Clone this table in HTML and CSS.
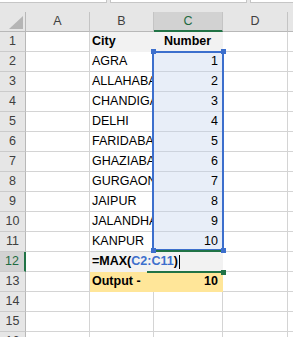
FILE: index.html
```html
<!DOCTYPE html>
<html>
<head>
<meta charset="utf-8">
<link rel="stylesheet" href="styles.css">
</head>
<body>
<div class="sheet">
  <div class="topbar"><span class="box b1"></span><span class="box b2"></span><span class="box b3"></span></div>
  <div class="spacer"></div>
  <div class="row hdr">
    <div class="corner"><svg width="14" height="13" viewBox="0 0 14 13"><polygon points="14,0 14,13 0,13" fill="#b5b5b5"/></svg></div>
    <div class="ch">A</div><div class="ch">B</div><div class="ch csel">C</div><div class="ch">D</div><div class="ch last"></div>
  </div>
  <div class="row"><div class="rh">1</div><div class="c"></div><div class="c b gray">City</div><div class="c b gray ctr">Number</div><div class="c"></div><div class="c"></div></div>
  <div class="row"><div class="rh">2</div><div class="c"></div><div class="c">AGRA</div><div class="c num sel">1</div><div class="c"></div><div class="c"></div></div>
  <div class="row"><div class="rh">3</div><div class="c"></div><div class="c">ALLAHABAD</div><div class="c num sel">2</div><div class="c"></div><div class="c"></div></div>
  <div class="row"><div class="rh">4</div><div class="c"></div><div class="c">CHANDIGARH</div><div class="c num sel">3</div><div class="c"></div><div class="c"></div></div>
  <div class="row"><div class="rh">5</div><div class="c"></div><div class="c">DELHI</div><div class="c num sel">4</div><div class="c"></div><div class="c"></div></div>
  <div class="row"><div class="rh">6</div><div class="c"></div><div class="c">FARIDABAD</div><div class="c num sel">5</div><div class="c"></div><div class="c"></div></div>
  <div class="row"><div class="rh">7</div><div class="c"></div><div class="c">GHAZIABAD</div><div class="c num sel">6</div><div class="c"></div><div class="c"></div></div>
  <div class="row"><div class="rh">8</div><div class="c"></div><div class="c">GURGAON</div><div class="c num sel">7</div><div class="c"></div><div class="c"></div></div>
  <div class="row"><div class="rh">9</div><div class="c"></div><div class="c">JAIPUR</div><div class="c num sel">8</div><div class="c"></div><div class="c"></div></div>
  <div class="row"><div class="rh">10</div><div class="c"></div><div class="c">JALANDHAR</div><div class="c num sel">9</div><div class="c"></div><div class="c"></div></div>
  <div class="row"><div class="rh">11</div><div class="c"></div><div class="c">KANPUR</div><div class="c num sel">10</div><div class="c"></div><div class="c"></div></div>
  <div class="row"><div class="rh rsel">12</div><div class="c"></div><div class="c b gray span2">=MAX(<span class="ref">C2:C11</span>)</div><div class="c"></div><div class="c"></div></div>
  <div class="row"><div class="rh">13</div><div class="c"></div><div class="c b yellow">Output -</div><div class="c b num yellow">10</div><div class="c"></div><div class="c"></div></div>
  <div class="row"><div class="rh">14</div><div class="c"></div><div class="c"></div><div class="c"></div><div class="c"></div><div class="c"></div></div>
  <div class="row"><div class="rh">15</div><div class="c"></div><div class="c"></div><div class="c"></div><div class="c"></div><div class="c"></div></div>
  <div class="row"><div class="rh">16</div><div class="c"></div><div class="c"></div><div class="c"></div><div class="c"></div><div class="c"></div></div>

  <div class="selbox"></div>
  <span class="handle blue h-tl"></span>
  <span class="handle blue h-tr"></span>
  <span class="handle blue h-bl"></span>
  <span class="handle blue h-br"></span>
  <span class="gline g-top"></span>
  <span class="gline g-bot"></span>
  <span class="handle green h-g"></span>
  <span class="caret"></span>
</div>
</body>
</html>
```

FILE: styles.css
```css
html, body {
  margin: 0;
  padding: 0;
  background: #ffffff;
  overflow: hidden;
}
.sheet {
  position: relative;
  width: 293px;
  height: 337px;
  overflow: hidden;
  font-family: "Liberation Sans", Arial, sans-serif;
  font-size: 12.5px;
  color: #000;
}
.topbar {
  height: 3px;
  background: #e6e6e6;
  position: relative;
  display: flex;
}
.topbar .box {
  height: 2px;
  background: #ffffff;
  border-bottom: 1px solid #c6c6c6;
}
.topbar .b1 { width: 106px; border-right: 1px solid #c6c6c6; }
.topbar .b2 { width: 135px; margin-left: 3px; border-right: 1px solid #c6c6c6; border-left: 1px solid #c6c6c6; }
.topbar .b3 { flex: 1; margin-left: 3px; border-left: 1px solid #c6c6c6; }
.spacer {
  height: 9px;
  background: #e6e6e6;
}
.row {
  display: grid;
  grid-template-columns: 26px 64px 64px 69px 65px 1fr;
  height: 20px;
}
.row > div {
  box-sizing: border-box;
  height: 20px;
  line-height: 19px;
  border-right: 1px solid #d4d4d4;
  border-bottom: 1px solid #d4d4d4;
  white-space: nowrap;
  overflow: hidden;
}
.hdr > div {
  background: #e6e6e6;
  border-right: 1px solid #c4c4c4;
  border-bottom: 1px solid #b8b8b8;
  text-align: center;
  color: #404040;
}
.hdr .corner {
  display: flex;
  align-items: flex-end;
  justify-content: flex-end;
  padding: 0 2px 2px 0;
  border-right-color: #b8b8b8;
}
.hdr .corner svg { display: block; }
.hdr .last { border-right: none; }
.hdr .csel {
  background: #d2d2d2;
  color: #1e6b41;
  border-bottom: 2px solid #217346;
  line-height: 18px;
}
.rh {
  background: #e6e6e6;
  text-align: center;
  color: #404040;
  border-right-color: #b8b8b8 !important;
  border-bottom-color: #cbcbcb !important;
}
.rh.rsel {
  background: #d2d2d2;
  color: #1e6b41;
  border-right: 2px solid #217346 !important;
}
.c {
  padding: 0 3px 0 2px;
}
.c.b { font-weight: bold; }
.c.ctr { text-align: center; }
.c.num { text-align: right; padding-right: 4px; }
.c.gray {
  background: #f2f2f2;
  border-color: #f2f2f2;
}
.c.yellow {
  background: #ffe699;
  border-color: #ffe699;
}
.c.sel {
  background: #e8eef8;
  border-bottom-color: #cdd3dd;
}
.c.span2 {
  grid-column: span 2;
  overflow: visible;
}
.ref { color: #3c6fcd; }

.selbox {
  position: absolute;
  left: 152px;
  top: 51px;
  width: 72px;
  height: 200px;
  box-sizing: border-box;
  border: 2px solid #3c6fcd;
}
.handle {
  position: absolute;
  width: 5px;
  height: 5px;
}
.handle.blue { background: #3c6fcd; }
.handle.green { background: #217346; }
.h-tl { left: 151px; top: 49px; }
.h-tr { left: 221px; top: 49px; }
.h-bl { left: 151px; top: 248px; }
.h-br { left: 221px; top: 248px; }
.gline {
  position: absolute;
  height: 2px;
  background: #217346;
}
.g-top { left: 156px; top: 250px; width: 65px; }
.g-bot { left: 147px; top: 271px; width: 75px; }
.h-g { left: 221px; top: 270px; }
.caret {
  position: absolute;
  left: 179px;
  top: 255px;
  width: 1px;
  height: 14px;
  background: #000;
}
```
